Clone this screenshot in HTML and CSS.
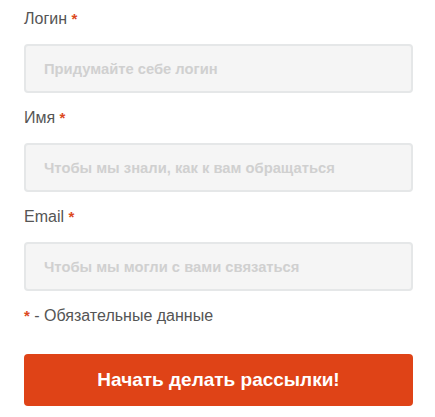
FILE: index.html
```html
<!DOCTYPE html>
<html lang="ru">
<head>
<meta charset="utf-8">
<link rel="stylesheet" href="styles.css">
</head>
<body>
<form class="form">
  <div class="field">
    <label class="label">Логин <span class="req">*</span></label>
    <input class="input" type="text" placeholder="Придумайте себе логин">
  </div>
  <div class="field">
    <label class="label">Имя <span class="req">*</span></label>
    <input class="input" type="text" placeholder="Чтобы мы знали, как к вам обращаться">
  </div>
  <div class="field">
    <label class="label">Email <span class="req">*</span></label>
    <input class="input" type="text" placeholder="Чтобы мы могли с вами связаться">
  </div>
  <p class="note"><span class="req">*</span> - Обязательные данные</p>
  <button class="btn" type="button">Начать делать рассылки!</button>
</form>
</body>
</html>
```

FILE: styles.css
```css
* { box-sizing: border-box; }
html, body { margin: 0; padding: 0; background: #fff; }
body { font-family: "Liberation Sans", Arial, sans-serif; }
.form {
  width: 389px;
  margin-left: 24px;
  padding-top: 10px;
  display: flex;
  flex-direction: column;
}
.field {
  display: flex;
  flex-direction: column;
  margin-bottom: 16px;
}
.label {
  font-size: 16px;
  line-height: 18px;
  color: #555;
  margin-bottom: 16px;
}
.req { color: #dc4a1e; font-weight: bold; font-size: 15px; }
.input {
  height: 49px;
  width: 100%;
  border: 2px solid #e5e7e8;
  border-radius: 4px;
  background: #f5f5f5;
  padding: 0 18px;
  font-family: "Liberation Sans", Arial, sans-serif;
  font-size: 14.75px;
  font-weight: bold;
  color: #555;
  outline: none;
}
.input::placeholder { color: #d0d0d0; }
.note {
  margin: 0;
  font-size: 16px;
  line-height: 18px;
  color: #555;
}
.btn {
  margin-top: 29px;
  height: 52px;
  width: 100%;
  border: 0;
  border-radius: 4px;
  background: #df4317;
  color: #fff;
  font-family: "Liberation Sans", Arial, sans-serif;
  font-size: 19px;
  font-weight: bold;
  cursor: pointer;
}
```
